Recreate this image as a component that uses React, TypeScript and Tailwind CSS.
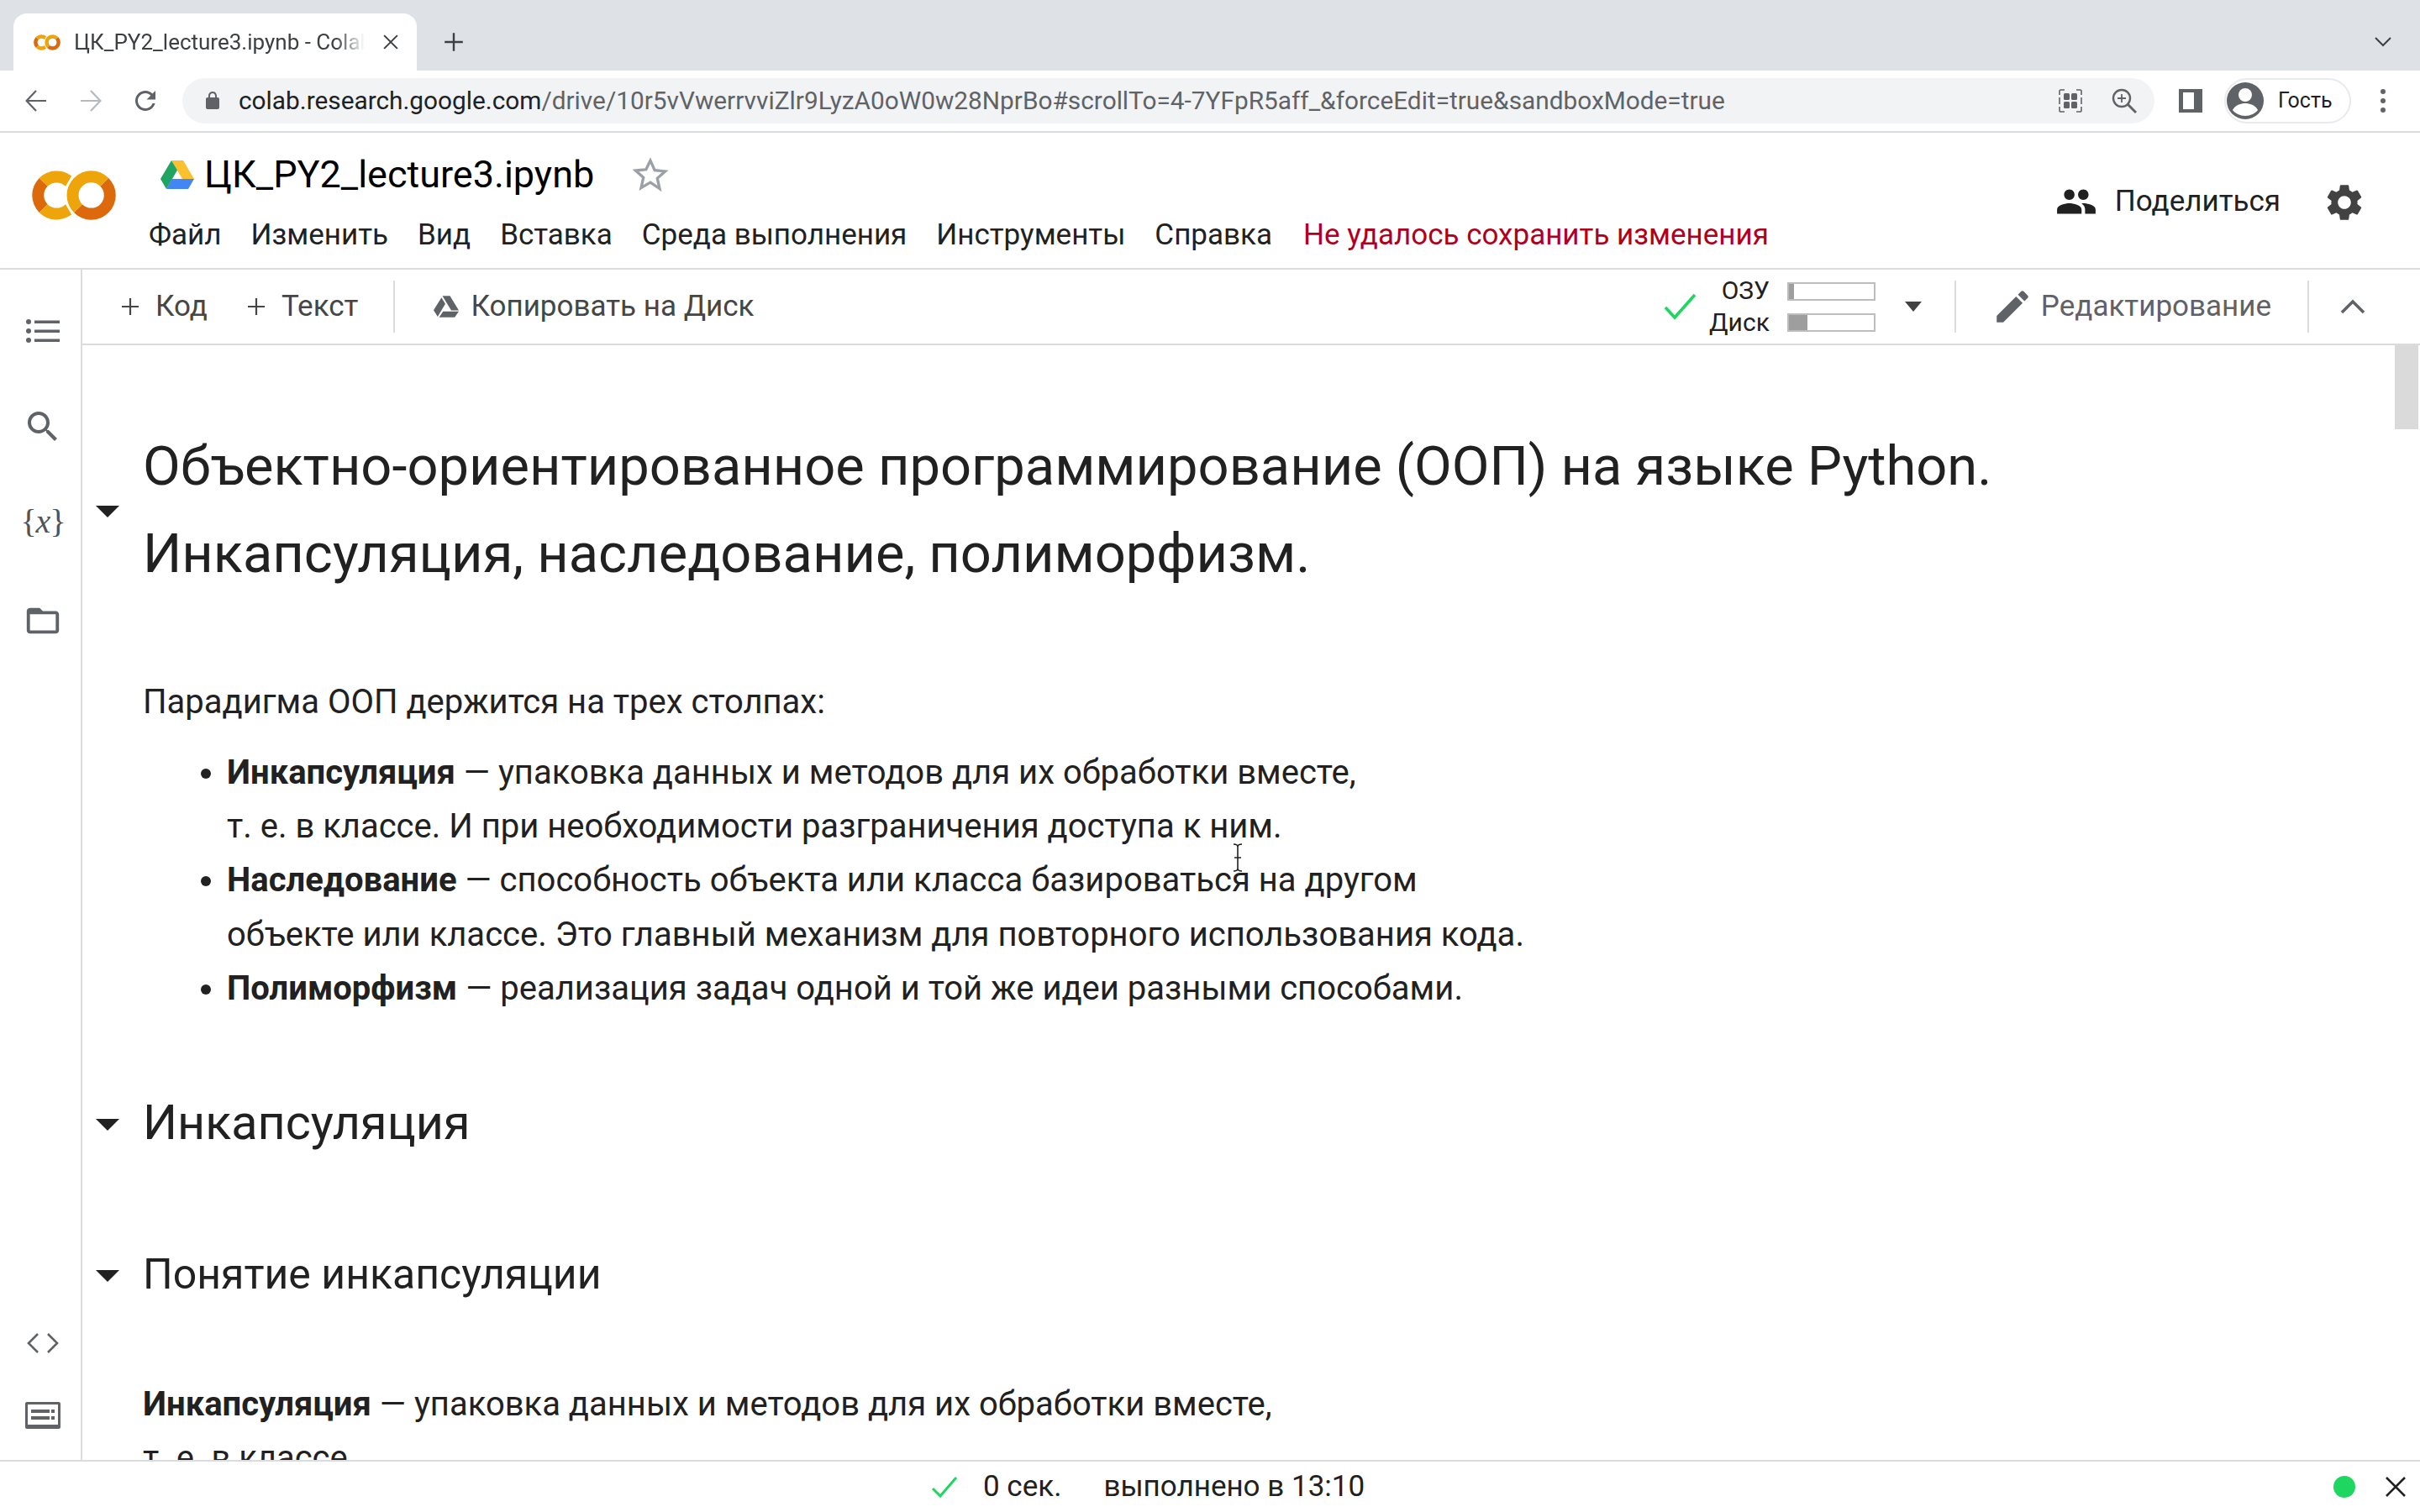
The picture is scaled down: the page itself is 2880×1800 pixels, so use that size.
import React from "react";

const P = ({ d, className, fill = "currentColor" }: { d: string; className: string; fill?: string }) => (
  <svg viewBox="0 0 24 24" className={className} fill={fill}><path d={d} /></svg>
);

const ColabLogo = ({ className }: { className: string }) => (
  <svg viewBox="0.1 5 23.8 14" className={className}>
    <path d="M4.54,9.46,2.19,7.1a6.93,6.93,0,0,0,0,9.79l2.36-2.36A3.59,3.59,0,0,1,4.54,9.46Z" fill="#dc6a0c" />
    <path d="M2.19,7.1,4.54,9.46a3.59,3.59,0,0,1,5.08,0l1.71-2.93h0l-.1-.08h0A6.93,6.93,0,0,0,2.19,7.1Z" fill="#eea40b" />
    <path d="M11.34,17.46h0L9.62,14.54a3.59,3.59,0,0,1-5.08,0L2.19,16.9a6.93,6.93,0,0,0,9,.65l.11-.09" fill="#eea40b" />
    <path d="M12,7.1a6.93,6.93,0,0,0,0,9.79l2.36-2.36a3.59,3.59,0,1,1,5.08-5.08L21.81,7.1A6.93,6.93,0,0,0,12,7.1Z" fill="#eea40b" />
    <path d="M21.81,7.1,19.46,9.46a3.59,3.59,0,0,1-5.08,5.08L12,16.9A6.93,6.93,0,0,0,21.81,7.1Z" fill="#dc6a0c" />
  </svg>
);

const Tri = () => (
  <svg viewBox="0 0 28 14" className="mt-[4px] w-[28px] h-[14px] shrink-0"><path d="M0 0h28L14 14z" fill="#212121" /></svg>
);

const Plus = ({ className }: { className: string }) => (
  <svg viewBox="0 0 24 24" className={className} fill="none" stroke="currentColor" strokeWidth="2.2"><path d="M12 2v20M2 12h20" /></svg>
);

const DriveMono = () => (
  <svg viewBox="0 0 40 34" className="w-[30px] h-[26px]" fill="#5f6368">
    <path d="M14 0h12l14 23H28zM12.5 2.5 18.6 12.5 6.5 33 0 22.5zM15 24.5h25L33.5 34H8.8z" />
  </svg>
);

export default function App() {
  return (
    <div className="relative w-[2880px] h-[1800px] flex flex-col overflow-hidden bg-white text-[#212121] font-['Roboto',sans-serif]">
      {/* tab strip */}
      <div className="h-[84px] shrink-0 bg-[#dee1e6] flex items-end pl-[16px] pr-[34px]">
        <div className="w-[480px] h-[68px] bg-white rounded-t-[16px] flex items-center pl-[24px] pr-[22px]">
          <ColabLogo className="w-[32px] h-[19px] shrink-0" />
          <div className="ml-[16px] w-[346px] text-[26px] text-[#3c4043] whitespace-nowrap overflow-hidden [mask-image:linear-gradient(to_right,#000_90%,transparent)]">ЦК_PY2_lecture3.ipynb - Colab</div>
          <svg viewBox="0 0 16 16" className="ml-auto w-[18px] h-[18px]" fill="none" stroke="#3c4043" strokeWidth="1.8"><path d="M1 1l14 14M15 1 1 15" /></svg>
        </div>
        <div className="h-[68px] flex items-center ml-[31px]">
          <Plus className="w-[26px] h-[26px] text-[#3c4043]" />
        </div>
        <div className="h-[68px] flex items-center ml-auto">
          <svg viewBox="0 0 20 12" className="w-[20px] h-[12px]" fill="none" stroke="#3c4043" strokeWidth="2"><path d="M1 1l9 9 9-9" /></svg>
        </div>
      </div>

      {/* browser toolbar */}
      <div className="h-[74px] shrink-0 bg-white border-b-2 border-[#dadce0] flex items-center">
        <svg viewBox="0 0 26 26" className="ml-[30px] w-[26px] h-[26px]" fill="none" stroke="#5f6368" strokeWidth="2.2"><path d="M25 13H2M13 1 1.6 13 13 25" /></svg>
        <svg viewBox="0 0 26 26" className="ml-[39px] w-[26px] h-[26px]" fill="none" stroke="#b6b9bd" strokeWidth="2.2"><path d="M1 13h23M13 1l11.4 12L13 25" /></svg>
        <P d="M17.65 6.35C16.2 4.9 14.21 4 12 4c-4.42 0-7.99 3.58-7.99 8s3.57 8 7.99 8c3.73 0 6.84-2.55 7.73-6h-2.08c-.82 2.33-3.04 4-5.65 4-3.31 0-6-2.69-6-6s2.69-6 6-6c1.66 0 3.14.69 4.22 1.78L13 11h7V4l-2.35 2.35z" className="ml-[34px] w-[36px] h-[36px] text-[#5f6368]" />
        <div className="ml-[26px] w-[2347px] h-[54px] rounded-full bg-[#f1f3f4] flex items-center pl-[24px] pr-[20px]">
          <P d="M18 8h-1V6c0-2.76-2.24-5-5-5S7 3.24 7 6v2H6c-1.1 0-2 .9-2 2v10c0 1.1.9 2 2 2h12c1.1 0 2-.9 2-2V10c0-1.1-.9-2-2-2zM9 6c0-1.66 1.34-3 3-3s3 1.34 3 3v2H9V6z" className="w-[24px] h-[24px] text-[#5f6368]" />
          <div className="ml-[19px] text-[29.8px] whitespace-nowrap text-[#5f6368]"><span className="text-[#202124]">colab.research.google.com</span>/drive/10r5vVwerrvviZlr9LyzA0oW0w28NprBo#scrollTo=4-7YFpR5aff_&amp;forceEdit=true&amp;sandboxMode=true</div>
          <svg viewBox="0 0 30 30" className="ml-auto w-[30px] h-[30px]" fill="#5f6368">
            <rect x="7" y="6" width="7" height="8" rx="1.5" /><rect x="16" y="6" width="7" height="8" rx="1.5" /><rect x="7" y="16" width="7" height="8" rx="1.5" /><rect x="16" y="16" width="7" height="8" rx="1.5" />
            <path d="M2 8V3.500A1.500 1.500 0 0 1 3.500 2H8M22 2h4.500A1.500 1.500 0 0 1 28 3.500V8M28 22v4.500a1.500 1.500 0 0 1-1.500 1.500H22M8 28H3.500A1.500 1.500 0 0 1 2 26.500V22M2 11v8M28 11v8" fill="none" stroke="#5f6368" strokeWidth="1.6" />
          </svg>
          <svg viewBox="0 0 32 32" className="ml-[33px] w-[32px] h-[32px]" fill="none" stroke="#5f6368" strokeWidth="2.4"><circle cx="13" cy="13" r="10" /><path d="M20.5 20.5 30 30" strokeWidth="3" /><path d="M13 8v10M8 13h10" strokeWidth="1.8" /></svg>
        </div>
        <svg viewBox="0 0 28 28" className="ml-[29px] w-[28px] h-[28px]" fill="#5f6368"><path fillRule="evenodd" d="M0 0h28v28H0zM5 4v20h13V4z" /></svg>
        <div className="ml-[26px] w-[151px] h-[54px] rounded-full border-2 border-[#e8eaed] flex items-center pl-[1px]">
          <svg viewBox="0 0 44 44" className="w-[44px] h-[44px]"><circle cx="22" cy="22" r="22" fill="#5f6368" /><circle cx="22" cy="15" r="8" fill="#fff" /><path d="M7 33c3-6 10-8 15-8s12 2 15 8c-3 4-9 7-15 7s-12-3-15-7z" fill="#fff" /></svg>
          <div className="ml-[17px] text-[25px] text-[#202124]">Гость</div>
        </div>
        <svg viewBox="0 0 6 28" className="ml-[35px] w-[6px] h-[28px]" fill="#5f6368"><circle cx="3" cy="3" r="3" /><circle cx="3" cy="14" r="3" /><circle cx="3" cy="25" r="3" /></svg>
      </div>

      {/* colab header */}
      <div className="h-[163px] shrink-0 bg-white border-b-2 border-[#dadce0] flex">
        <div className="w-[177px] shrink-0 flex items-start pl-[38px] pt-[45px]">
          <ColabLogo className="w-[100px] h-[59px]" />
        </div>
        <div className="flex-1 flex flex-col pt-[27px]">
          <div className="flex items-center h-[46px] pl-[14px]">
            <svg viewBox="0 0 40 34" className="w-[40px] h-[34px] shrink-0">
              <path d="M13 0h14l13 22H26z" fill="#fbc02d" /><path d="M13 0l7 11.5L7 34 0 22z" fill="#1fa463" /><path d="M13.5 22H40l-7 12H7z" fill="#4285f4" />
            </svg>
            <div className="ml-[12px] text-[45px] leading-[46px] text-[#000]">ЦК_PY2_lecture3.ipynb</div>
            <svg viewBox="0 0 24 24" className="ml-[45px] w-[44px] h-[44px]" fill="none" stroke="#9aa0a6" strokeWidth="1.8"><path d="M12 2.800l2.800 6.300 6.800.700-5.100 4.500 1.500 6.700L12 17l-6 3.500 1.500-6.700-5.100-4.500 6.800-.700z" /></svg>
          </div>
          <div className="flex items-center mt-[27px] gap-[35px] text-[35px] leading-[44px] text-[#212121]">
            <span>Файл</span><span>Изменить</span><span>Вид</span><span>Вставка</span><span>Среда выполнения</span><span>Инструменты</span><span>Справка</span>
            <span className="ml-[2px] text-[#b00020]">Не удалось сохранить изменения</span>
          </div>
        </div>
        <div className="shrink-0 flex items-start pt-[57px] pr-[64px]">
          <P d="M16 11c1.660 0 2.990-1.340 2.990-3S17.660 5 16 5c-1.660 0-3 1.340-3 3s1.340 3 3 3zm-8 0c1.660 0 2.990-1.340 2.990-3S9.660 5 8 5C6.340 5 5 6.340 5 8s1.340 3 3 3zm0 2c-2.330 0-7 1.170-7 3.500V19h14v-2.500c0-2.330-4.670-3.500-7-3.500zm8 0c-.290 0-.620.020-.970.050 1.160.840 1.970 1.970 1.970 3.450V19h6v-2.500c0-2.330-4.670-3.500-7-3.500z" className="w-[50px] h-[50px] text-[#212121]" />
          <div className="ml-[21px] text-[35px] leading-[50px] text-[#212121]">Поделиться</div>
          <P d="M19.140,12.940c0.040-0.300,0.060-0.610,0.060-0.940c0-0.320-0.020-0.640-0.070-0.940l2.030-1.580c0.180-0.140,0.230-0.410,0.120-0.610 l-1.920-3.320c-0.120-0.220-0.370-0.290-0.590-0.220l-2.390,0.960c-0.500-0.380-1.030-0.700-1.620-0.940L14.400,2.810c-0.040-0.240-0.240-0.410-0.480-0.410 h-3.840c-0.240,0-0.430,0.170-0.470,0.410L9.250,5.350C8.660,5.590,8.120,5.920,7.630,6.290L5.240,5.330c-0.220-0.080-0.470,0-0.590,0.220L2.740,8.870 C2.620,9.080,2.660,9.340,2.860,9.480l2.030,1.580C4.840,11.360,4.800,11.690,4.800,12s0.020,0.640,0.070,0.940l-2.030,1.580 c-0.180,0.140-0.230,0.410-0.120,0.610l1.920,3.320c0.120,0.220,0.370,0.290,0.590,0.220l2.390-0.960c0.500,0.380,1.030,0.700,1.620,0.940l0.360,2.540 c0.050,0.240,0.240,0.410,0.480,0.410h3.840c0.240,0,0.440-0.170,0.470-0.410l0.360-2.540c0.590-0.240,1.130-0.560,1.620-0.940l2.390,0.960 c0.220,0.080,0.470,0,0.590-0.220l1.920-3.320c0.120-0.220,0.070-0.470-0.120-0.610L19.140,12.940z M12,15.600c-1.980,0-3.600-1.620-3.600-3.600 s1.620-3.600,3.600-3.600s3.600,1.620,3.600,3.600S13.980,15.600,12,15.600z" className="ml-[50px] w-[52px] h-[52px] text-[#424242]" />
        </div>
      </div>

      {/* body */}
      <div className="flex-1 min-h-0 flex">
        {/* sidebar */}
        <div className="w-[98px] shrink-0 border-r-2 border-[#dadce0] flex flex-col items-center text-[#5f6368] pt-[58px] pl-[6px]">
          <svg viewBox="0 0 40 30" className="w-[40px] h-[30px]" fill="#5f6368"><circle cx="3" cy="4" r="3" /><circle cx="3" cy="15" r="3" /><circle cx="3" cy="26" r="3" /><rect x="10" y="2.5" width="30" height="3.5" /><rect x="10" y="13.5" width="30" height="3.5" /><rect x="10" y="24.5" width="30" height="3.5" /></svg>
          <P d="M15.5 14h-.79l-.28-.27C15.41 12.59 16 11.11 16 9.5 16 5.91 13.09 3 9.5 3S3 5.91 3 9.5 5.91 16 9.5 16c1.61 0 3.09-.59 4.23-1.57l.27.28v.79l5 4.99L20.49 19l-4.99-5zm-6 0C7.01 14 5 11.99 5 9.5S7.01 5 9.5 5 14 7.010 14 9.5 11.99 14 9.5 14z" className="mt-[75px] w-[48px] h-[48px]" />
          <div className="mt-[66px] h-[46px] text-[40px] leading-[46px] tracking-[-1px] font-['Liberation_Serif',serif] text-[#505458] whitespace-nowrap">{"{"}<i>x</i>{"}"}</div>
          <P d="M20 6h-8l-2-2H4c-1.1 0-2 .9-2 2v12c0 1.1.9 2 2 2h16c1.1 0 2-.9 2-2V8c0-1.1-.9-2-2-2zm0 12H4V8h16v10z" className="mt-[72px] w-[46px] h-[46px]" />
          <div className="flex-1" />
          <svg viewBox="0 0 40 24" className="w-[40px] h-[24px]" fill="none" stroke="#5f6368" strokeWidth="2.6"><path d="M14 1 3 12l11 11M26 1l11 11-11 11" /></svg>
          <svg viewBox="0 0 42 32" className="mt-[58px] mb-[37px] w-[42px] h-[32px]" fill="#5f6368"><path fillRule="evenodd" d="M2 0h38a2 2 0 0 1 2 2v28a2 2 0 0 1-2 2H2a2 2 0 0 1-2-2V2a2 2 0 0 1 2-2zM3 3v24h36V3z" /><rect x="7" y="9" width="22" height="4" /><rect x="31" y="9" width="4" height="4" /><rect x="7" y="17" width="22" height="4" /><rect x="31" y="17" width="4" height="4" /></svg>
        </div>

        <div className="flex-1 min-w-0 flex flex-col">
          {/* notebook toolbar */}
          <div className="h-[90px] shrink-0 bg-white border-b-2 border-[#dadce0] flex items-center text-[35px] text-[#444746]">
            <Plus className="ml-[45px] w-[24px] h-[24px]" />
            <span className="ml-[18px]">Код</span>
            <Plus className="ml-[46px] w-[24px] h-[24px]" />
            <span className="ml-[18px]">Текст</span>
            <span className="ml-[42px] w-[2px] h-[62px] bg-[#dadce0]" />
            <span className="ml-[46px]"><DriveMono /></span>
            <span className="ml-[14px]">Копировать на Диск</span>
            <svg viewBox="0 0 40 32" className="ml-auto w-[40px] h-[32px]" fill="none" stroke="#1ed760" strokeWidth="3.6"><path d="M2 17l11 12L37 2" /></svg>
            <div className="ml-[14px] w-[72px] flex flex-col items-end text-[30px] leading-[38px] text-[#212121]"><span>ОЗУ</span><span>Диск</span></div>
            <div className="ml-[21px] flex flex-col gap-[15px]">
              <div className="w-[105px] h-[22px] border-2 border-[#bdbdbd] bg-white"><div className="w-[6px] h-full bg-[#9e9e9e]" /></div>
              <div className="w-[105px] h-[22px] border-2 border-[#bdbdbd] bg-white"><div className="w-[22px] h-full bg-[#9e9e9e]" /></div>
            </div>
            <svg viewBox="0 0 20 12" className="ml-[35px] w-[20px] h-[12px]"><path d="M0 0h20L10 12z" fill="#424242" /></svg>
            <span className="ml-[39px] w-[2px] h-[62px] bg-[#dadce0]" />
            <P d="M3 17.25V21h3.75L17.81 9.94l-3.75-3.75L3 17.25zM20.71 7.04c.39-.39.39-1.02 0-1.41l-2.34-2.34c-.39-.39-1.02-.39-1.41 0l-1.83 1.83 3.75 3.75 1.83-1.83z" className="ml-[42px] w-[50px] h-[50px] text-[#5f6368]" />
            <span className="ml-[9px] text-[#5f6368]">Редактирование</span>
            <span className="ml-[43px] w-[2px] h-[62px] bg-[#dadce0]" />
            <svg viewBox="0 0 30 18" className="ml-[37px] mr-[65px] w-[30px] h-[18px]" fill="none" stroke="#5f6368" strokeWidth="3.6"><path d="M2 16 15 3l13 13" /></svg>
          </div>

          <div className="flex-1 min-h-0 flex">
            <div className="flex-1 min-w-0 overflow-hidden flex flex-col">
              <div className="mt-[92px] flex items-center pl-[16px]">
                <Tri />
                <div className="ml-[28px] text-[65px] leading-[104px] text-[#212121] whitespace-nowrap">Объектно-ориентированное программирование (ООП) на языке Python.<br />Инкапсуляция, наследование, полиморфизм.</div>
              </div>
              <div className="mt-[93px] ml-[72px] text-[40px] leading-[64px] whitespace-nowrap">Парадигма ООП держится на трех столпах:</div>
              <ul className="mt-[20px] ml-[172px] list-disc text-[40px] leading-[64.2px] whitespace-nowrap">
                <li><b>Инкапсуляция</b> — упаковка данных и методов для их обработки вместе,<br />т. е. в классе. И при необходимости разграничения доступа к ним.</li>
                <li><b>Наследование</b> — способность объекта или класса базироваться на другом<br />объекте или классе. Это главный механизм для повторного использования кода.</li>
                <li><b>Полиморфизм</b> — реализация задач одной и той же идеи разными способами.</li>
              </ul>
              <div className="mt-[88px] flex items-center pl-[16px]">
                <Tri />
                <div className="ml-[28px] text-[57.5px] leading-[80px] whitespace-nowrap">Инкапсуляция</div>
              </div>
              <div className="mt-[105px] flex items-center pl-[16px]">
                <Tri />
                <div className="ml-[28px] text-[50px] leading-[70px] whitespace-nowrap">Понятие инкапсуляции</div>
              </div>
              <div className="mt-[88px] ml-[72px] text-[40px] leading-[64.4px] whitespace-nowrap"><b>Инкапсуляция</b> — упаковка данных и методов для их обработки вместе,<br />т. е. в классе</div>
            </div>
            <div className="w-[32px] shrink-0 bg-white"><div className="mx-[2px] h-[100px] bg-[#dadada]" /></div>
          </div>
        </div>
      </div>

      {/* status bar */}
      <div className="h-[62px] shrink-0 bg-white border-t-2 border-[#dadce0] flex items-center text-[35px] text-[#212121]">
        <svg viewBox="0 0 32 26" className="ml-[1108px] w-[32px] h-[26px]" fill="none" stroke="#1ed760" strokeWidth="3"><path d="M2 15l9 9L30 2" /></svg>
        <span className="ml-[30px]">0 сек.</span>
        <span className="ml-[50px]">выполнено в 13:10</span>
        <span className="ml-auto w-[26px] h-[26px] rounded-full bg-[#1ed760]" />
        <svg viewBox="0 0 24 24" className="ml-[36px] mr-[17px] w-[24px] h-[24px]" fill="none" stroke="#212121" strokeWidth="2.6"><path d="M1 1l22 22M23 1 1 23" /></svg>
      </div>

      {/* mouse i-beam */}
      <svg viewBox="0 0 14 34" className="absolute left-[1466px] top-[1004px] w-[14px] h-[34px]" fill="none" stroke="#212121" strokeWidth="1.6"><path d="M2 1c3 0 5 1 5 3v26c0 2-2 3-5 3M12 1c-3 0-5 1-5 3v26c0 2 2 3 5 3M3 17h8" /></svg>
    </div>
  );
}
